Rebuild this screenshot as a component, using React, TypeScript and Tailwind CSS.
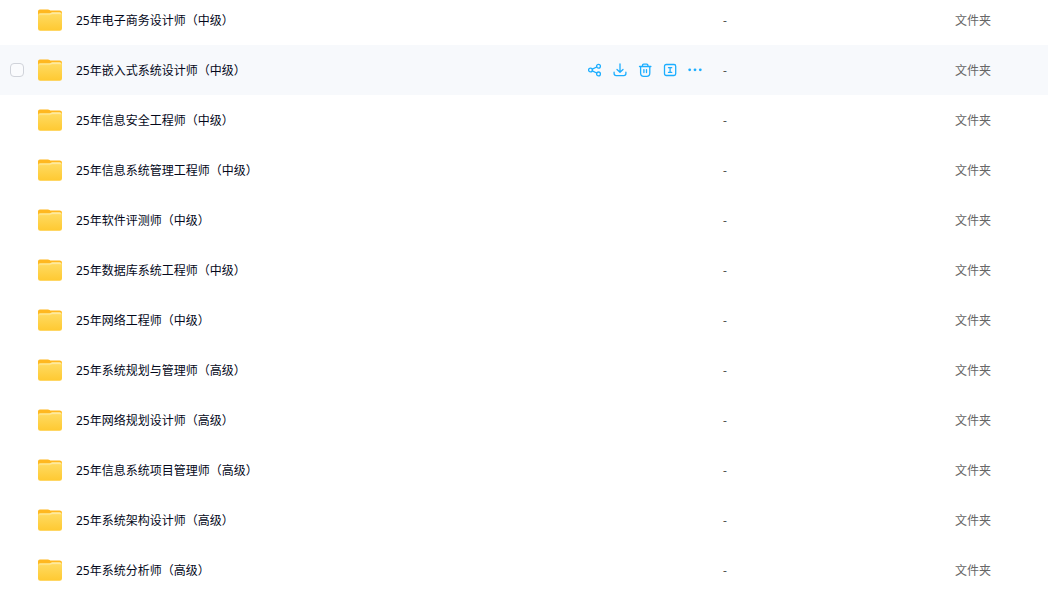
import { useState } from "react";

const files: string[] = [
  "25年电子商务设计师（中级）",
  "25年嵌入式系统设计师（中级）",
  "25年信息安全工程师（中级）",
  "25年信息系统管理工程师（中级）",
  "25年软件评测师（中级）",
  "25年数据库系统工程师（中级）",
  "25年网络工程师（中级）",
  "25年系统规划与管理师（高级）",
  "25年网络规划设计师（高级）",
  "25年信息系统项目管理师（高级）",
  "25年系统架构设计师（高级）",
  "25年系统分析师（高级）",
]

function Folder() {
  return (
    <svg width="24" height="22" viewBox="0 0 24 22" className="shrink-0">
      <defs>
        <linearGradient id="folder" x1="0" y1="0" x2="0" y2="1">
          <stop offset="0" stopColor="#ffdc65" />
          <stop offset="1" stopColor="#ffc931" />
        </linearGradient>
        <linearGradient id="shine" x1="0" y1="0" x2="0" y2="1">
          <stop offset="0" stopColor="#ffefb5" />
          <stop offset="1" stopColor="#ffdc65" />
        </linearGradient>
      </defs>
      <path d="M0 2.400Q0 .5 1.900.5H10q.9 0 1.600.5l.6.4h9.400Q24 1.400 24 3.800V12H0z" fill="#ffb820" />
      <path d="M0 6.200q0-1.900 1.900-1.900h9.300q.8 0 1.400-.4l.3-.2q.6-.4 1.400-.4h7.500Q24 3.300 24 5.500v14q0 2.300-2.300 2.300H2.300Q0 21.800 0 19.500z" fill="url(#folder)" />
      <path d="M.5 6.700q0-2.200 1.800-2.200h9.100q.8 0 1.400-.4t1.500-.5h7.300q1.900 0 1.900 2.300-.5-.6-1.900-.6h-7.200q-.8 0-1.500.5t-1.600.5H2.300Q.9 6.300.5 6.700z" fill="url(#shine)" />
    </svg>
  )
}

function Action({ title, children }: any) {
  return (
    <button title={title} className="flex size-[14px] items-center justify-center">
      <svg width="14" height="14" viewBox="0 0 14 14" fill="none" stroke="#1caeff" strokeWidth="1.3" strokeLinecap="round" strokeLinejoin="round">
        {children}
      </svg>
    </button>
  )
}

function Actions() {
  return (
    <div className="flex gap-[11px] pl-px">
      <Action title="分享">
        <circle cx="2.500" cy="7" r="1.900" />
        <circle cx="10.500" cy="3.200" r="1.900" />
        <circle cx="10.500" cy="10.900" r="1.900" />
        <path d="M4.300 6.100 8.700 4M4.300 7.900 8.700 10" />
      </Action>
      <Action title="下载">
        <path d="M7 1v8.200M4 6.500 7 9.300l3-2.800M1.100 9.200v1.300q0 2.100 2.100 2.100h7.600q2.100 0 2.100-2.100V9.200" />
      </Action>
      <Action title="删除">
        <path d="M1.500 3.500h11.400M4.500 3.300V2.200q0-1.100 1.100-1.100h3.200q1.100 0 1.100 1.100v1.100M2.600 3.700V10q0 3.300 3.100 3.300h3Q11.800 13.300 11.800 10V3.700M5.900 6.600v3M8.500 6.600v3" />
      </Action>
      <Action title="重命名">
        <rect x="1.500" y="1.500" width="11.200" height="11" rx="1.700" />
        <path d="M5.500 4.700h3.200M5.500 9.400h3.200M7.100 4.700v4.700" />
      </Action>
      <Action title="更多">
        <g fill="#1caeff" stroke="none">
          <circle cx="1.700" cy="6.800" r="1.400" />
          <circle cx="7" cy="6.800" r="1.400" />
          <circle cx="12.300" cy="6.800" r="1.400" />
        </g>
      </Action>
    </div>
  )
}

function Row({ name, active, onSelect }: any) {
  return (
    <li onClick={onSelect} className={`flex h-[50px] items-center ${active ? "bg-[#f7f9fc]" : "bg-white"}`}>
      <div className="w-[38px] shrink-0 pl-[10px]">
        {active && <input type="checkbox" className="block size-[14px] appearance-none rounded-[4px] border border-[#d0d3da] bg-white/40" />}
      </div>
      <Folder />
      <span className="ml-[14px] w-[511px] shrink-0 whitespace-nowrap pt-0.5 text-[#03081a]">{name}</span>
      <div className="w-[136px] shrink-0">{active && <Actions />}</div>
      <span className="w-[232px] shrink-0 pt-0.5 text-[#555]">-</span>
      <span className="pt-0.5 text-[#666]">文件夹</span>
    </li>
  )
}

export default function App() {
  const [selected, setSelected] = useState(1)
  return (
    <main className="h-screen overflow-hidden bg-white font-['Noto_Sans','Noto_Sans_CJK_SC',sans-serif] text-xs">
      <ul className="-mt-[5px]">
        {files.map((name, i) => <Row key={i} name={name} active={selected === i} onSelect={() => setSelected(i)} />)}
      </ul>
    </main>
  )
}
